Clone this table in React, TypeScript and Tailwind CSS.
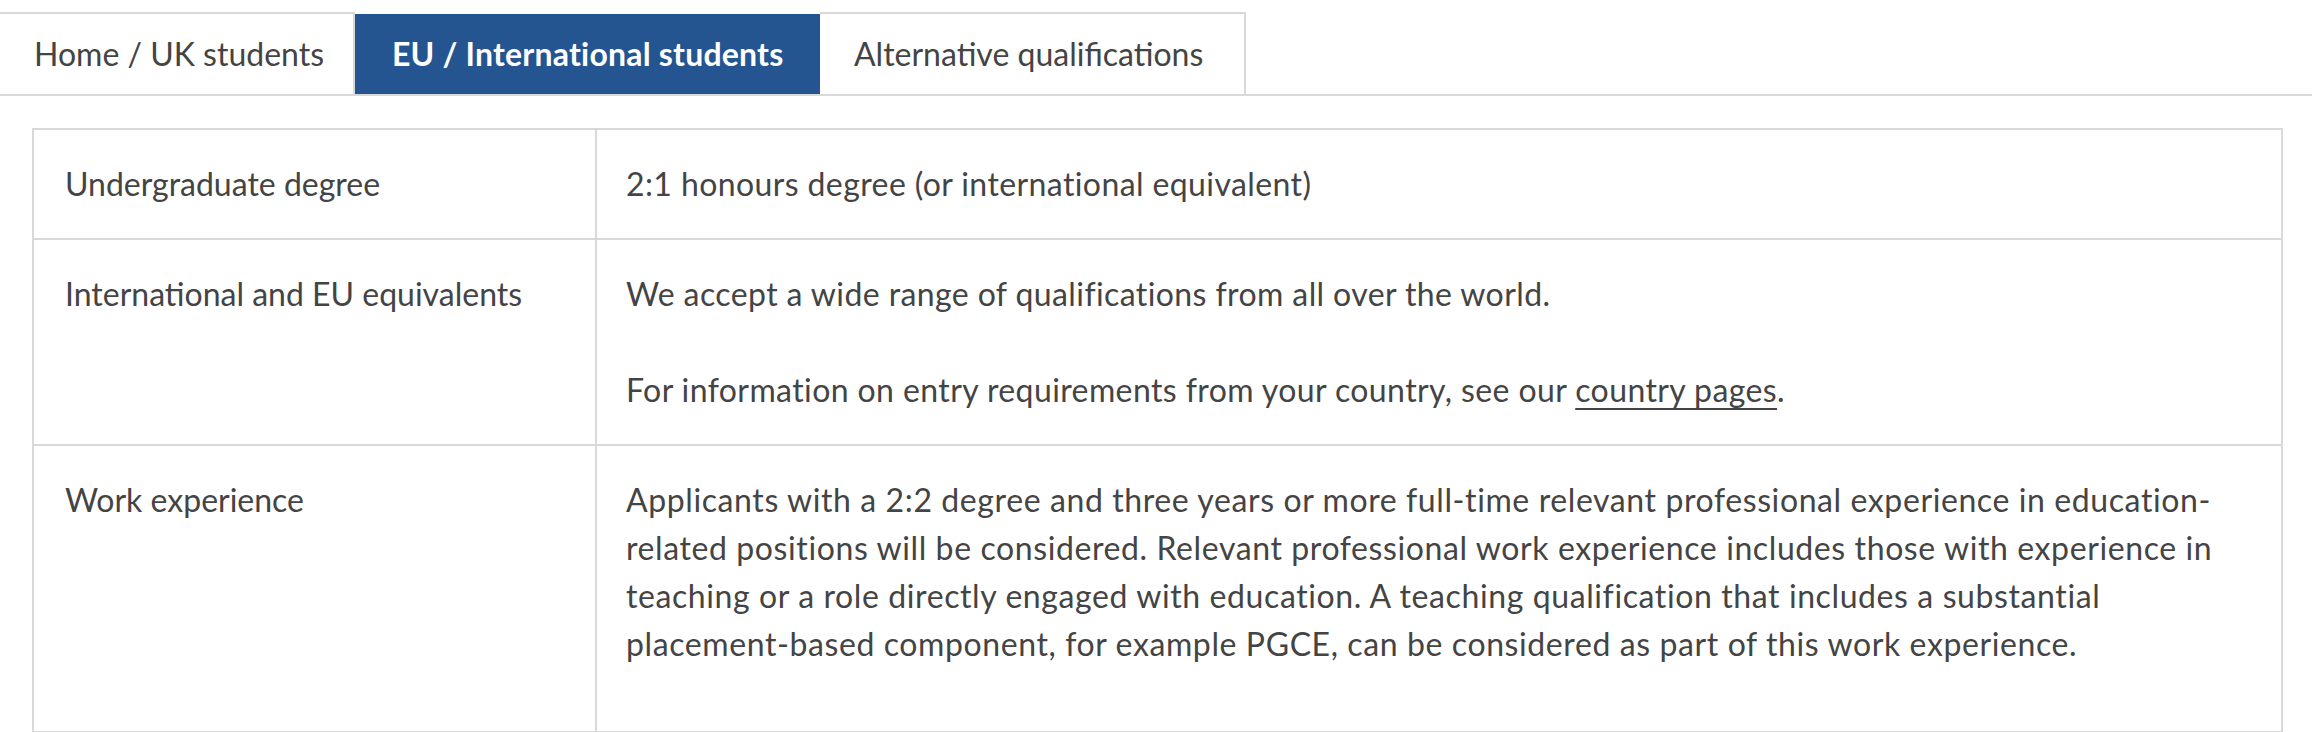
import React from 'react'

const TABS = [
  { label: 'Home / UK students', width: 'w-[355px]', active: false },
  { label: 'EU / International students', width: 'w-[465px]', active: true },
  { label: 'Alternative qualifications', width: 'w-[426px]', active: false },
]

// Lines of the work experience text, broken where the reference breaks them
const WORK_LINES = [
  'Applicants with a 2:2 degree and three years or more full-time relevant professional experience in education-',
  'related positions will be considered. Relevant professional work experience includes those with experience in',
  'teaching or a role directly engaged with education. A teaching qualification that includes a substantial',
  'placement-based component, for example PGCE, can be considered as part of this work experience.',
]

export default function App() {
  return (
    <div className="w-[2312px] h-[732px] overflow-hidden bg-white pt-3 text-[#444444] font-['Lato',sans-serif] text-[32px] leading-[48px]">
      {/* Tabs */}
      <div className="flex border-b-2 border-[#d9d9d9]">
        {TABS.map((tab) =>
          tab.active ? (
            <div
              key={tab.label}
              className={`${tab.width} h-[82px] border-t-2 border-white bg-[#245591] pl-[37px] flex items-center font-bold text-white tracking-[0.2px]`}
            >
              {tab.label}
            </div>
          ) : (
            <div
              key={tab.label}
              className={`${tab.width} h-[82px] border-t-2 border-r-2 border-[#d9d9d9] pl-[34px] flex items-center`}
            >
              {tab.label}
            </div>
          )
        )}
      </div>

      {/* Requirements table */}
      <div className="mt-8 ml-8 w-[2251px] border-2 border-[#d9d9d9]">
        <div className="flex border-b-2 border-[#d9d9d9]">
          <div className="w-[563px] shrink-0 border-r-2 border-[#d9d9d9] pl-[31px] py-[30px]">
            Undergraduate degree
          </div>
          <div className="flex-1 pl-[29px] pr-[30px] py-[30px] tracking-[0.4px]">
            2:1 honours degree (or international equivalent)
          </div>
        </div>

        <div className="flex border-b-2 border-[#d9d9d9]">
          <div className="w-[563px] shrink-0 border-r-2 border-[#d9d9d9] pl-[31px] py-[30px]">
            International and EU equivalents
          </div>
          <div className="flex-1 pl-[29px] pr-[30px] py-[30px] flex flex-col gap-12 tracking-[0.4px]">
            <p>We accept a wide range of qualifications from all over the world.</p>
            <p>
              For information on entry requirements from your country, see our{' '}
              <a href="#" className="underline decoration-2 underline-offset-[6px]">
                country pages
              </a>
              .
            </p>
          </div>
        </div>

        <div className="flex">
          <div className="w-[563px] shrink-0 border-r-2 border-[#d9d9d9] pl-[31px] pt-[30px] pb-[63px]">
            Work experience
          </div>
          <div className="flex-1 pl-[29px] pr-[30px] pt-[30px] pb-[63px] tracking-[0.6px]">
            {WORK_LINES.map((line) => (
              <span key={line} className="block whitespace-nowrap">
                {line}
              </span>
            ))}
          </div>
        </div>
      </div>
    </div>
  )
}
